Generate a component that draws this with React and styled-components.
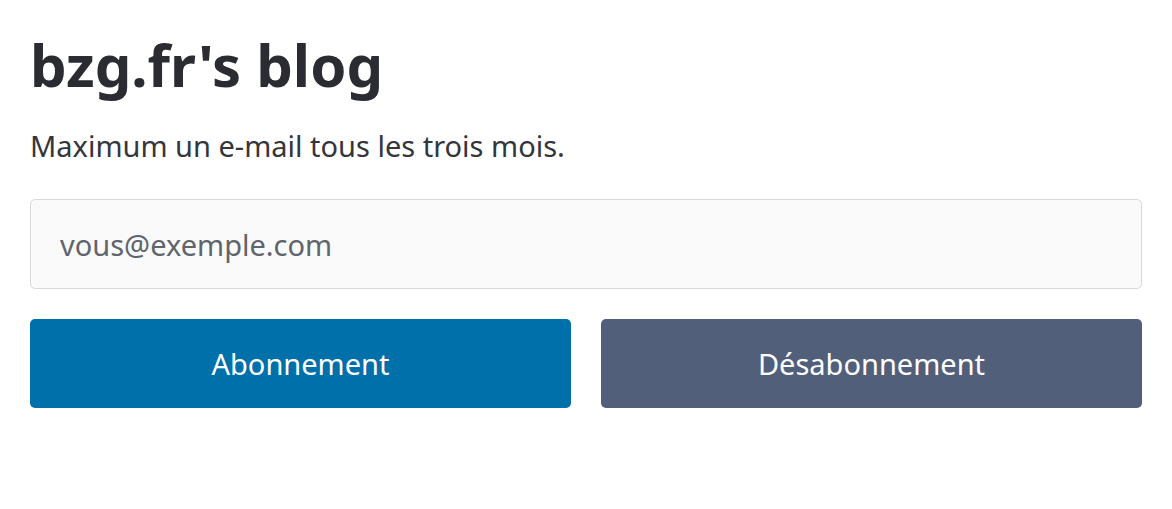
import React from 'react';
import styled, { createGlobalStyle } from 'styled-components';

const GlobalStyle = createGlobalStyle`
  body {
    margin: 0;
    background: #ffffff;
    font-family: 'Noto Sans', 'Open Sans', sans-serif;
  }
`;

const Page = styled.main`
  padding: 26px 30px;
  color: #2b2d33;
`;

const Title = styled.h1`
  margin: 0;
  font-size: 58px;
  font-weight: 700;
  line-height: 78px;
  color: #2a2c31;
`;

const Lead = styled.p`
  margin: 22px 0 0;
  font-size: 29px;
  line-height: 40px;
  color: #34363c;
`;

const Form = styled.form`
  display: flex;
  flex-direction: column;
  gap: 30px;
  margin-top: 33px;
`;

const Input = styled.input`
  box-sizing: border-box;
  width: 100%;
  height: 90px;
  padding: 0 29px;
  border: 1px solid #d9d9dc;
  border-radius: 5px;
  background: #fafafa;
  font-family: inherit;
  font-size: 29px;
  color: #2b2d33;
  &::placeholder {
    color: #60646d;
  }
  &:focus {
    outline: none;
  }
`;

const Buttons = styled.div`
  display: grid;
  grid-template-columns: 1fr 1fr;
  gap: 30px;
`;

const Button = styled.button`
  height: 89px;
  border: none;
  border-radius: 5px;
  background: ${(p) => (p.$secondary ? '#525f7a' : '#0070ab')};
  color: #ffffff;
  font-family: inherit;
  font-size: 29px;
  cursor: pointer;
`;

export default function App() {
  return (
    <>
      <GlobalStyle />
      <Page>
        <Title>bzg.fr's blog</Title>
        <Lead>Maximum un e-mail tous les trois mois.</Lead>
        <Form onSubmit={(e) => e.preventDefault()}>
          <Input type="email" placeholder="vous@exemple.com" />
          <Buttons>
            <Button type="submit">Abonnement</Button>
            <Button type="button" $secondary>
              Désabonnement
            </Button>
          </Buttons>
        </Form>
      </Page>
    </>
  );
}
